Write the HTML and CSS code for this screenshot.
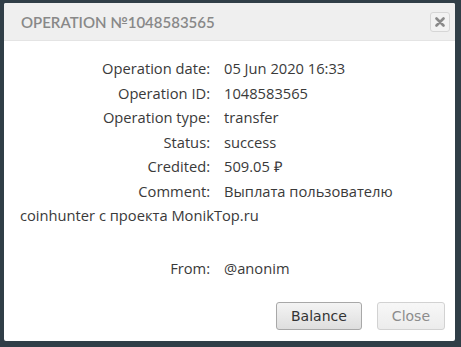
FILE: index.html
```html
<!DOCTYPE html>
<html lang="en">

<head>
    <meta charset="UTF-8">
    <title>Operation</title>
    <link rel="stylesheet" href="styles.css">
</head>

<body>
    <div class="modal">
        <div class="modal-header">
            <h2 class="modal-title">Operation №1048583565</h2>
            <button class="btn-x">
                <svg width="10" height="10" viewBox="0 0 10 10">
                    <path d="M1.5 1.5 L8.5 8.5 M8.5 1.5 L1.5 8.5" stroke="#8a8a8a" stroke-width="2.6" stroke-linecap="round" />
                </svg>
            </button>
        </div>
        <div class="modal-body">
            <div class="row"><span class="label">Operation date:</span>05 Jun 2020 16:33</div>
            <div class="row"><span class="label">Operation ID:</span>1048583565</div>
            <div class="row"><span class="label">Operation type:</span>transfer</div>
            <div class="row"><span class="label">Status:</span>success</div>
            <div class="row"><span class="label">Credited:</span>509.05 ₽</div>
            <div class="row"><span class="label">Comment:</span>Выплата пользователю coinhunter с проекта MonikTop.ru</div>
            <div class="row empty">&nbsp;</div>
            <div class="row"><span class="label">From:</span>@anonim</div>
        </div>
        <div class="modal-footer">
            <button class="btn">Balance</button>
            <button class="btn disabled">Close</button>
        </div>
    </div>
</body>

</html>
```

FILE: styles.css
```css
body {
    margin: 0;
    background-color: #303e47;
    padding: 3px 6px 6px 4px;
}

.modal {
    width: 451px;
    height: 338px;
    background: #fff;
    border-radius: 2px;
    display: flex;
    flex-direction: column;
}

.modal-header {
    display: flex;
    align-items: center;
    justify-content: space-between;
    height: 37px;
    padding: 0 5px 0 17px;
    background: #efefef;
    border-bottom: 1px solid #e4e4e4;
    border-radius: 2px 2px 0 0;
}

.modal-title {
    margin: 0;
    font-family: Lato, sans-serif;
    font-size: 15px;
    font-weight: 600;
    text-transform: uppercase;
    letter-spacing: 0;
    color: #888;
}

.btn-x {
    width: 20px;
    height: 20px;
    padding: 0;
    display: flex;
    align-items: center;
    justify-content: center;
    background: #f2f2f2;
    border: 1px solid #d6d6d6;
    border-radius: 3px;
}

.modal-body {
    flex: 1;
    padding: 15px 16px 0 16px;
    font-family: "Open Sans", sans-serif;
    font-size: 14.7px;
    color: #3a3a3a;
}

.row {
    line-height: 24.5px;
}

.label {
    display: inline-block;
    width: 190px;
    padding-right: 14px;
    text-align: right;
}

.empty {
    height: 28px;
}

.modal-footer {
    display: flex;
    justify-content: flex-end;
    gap: 15px;
    padding: 0 10px 11px 0;
}

.btn {
    height: 28px;
    padding: 0 14px;
    font-family: "DejaVu Sans", sans-serif;
    font-size: 14px;
    color: #333;
    background: linear-gradient(#f4f4f4, #dedede);
    border: 1px solid #a8a8a8;
    border-radius: 3px;
}

.btn.disabled {
    color: #8c8c8c;
    background: linear-gradient(#f7f7f7, #ececec);
    border-color: #d2d2d2;
}
```
